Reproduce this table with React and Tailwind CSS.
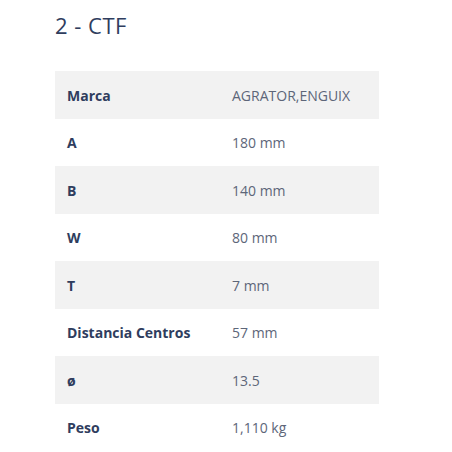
import React from 'react';

const rows = [
  ['Marca', 'AGRATOR,ENGUIX'],
  ['A', '180 mm'],
  ['B', '140 mm'],
  ['W', '80 mm'],
  ['T', '7 mm'],
  ['Distancia Centros', '57 mm'],
  ['ø', '13.5'],
  ['Peso', '1,110 kg'],
];

const App = () => {
  return (
    <div className="w-[452px] h-[452px] bg-white overflow-hidden font-['Open_Sans',sans-serif]">
      <div className="pl-[55px] pt-[11px]">
        <h2 className="text-[22px] leading-[28px] font-normal text-[#2f3d5e] tracking-[0.5px]">2 - CTF</h2>
      </div>
      <div className="ml-[55px] mt-[32px] w-[324px]">
        {rows.map(([label, value], i) => (
          <div
            key={label}
            className={`flex items-center h-[47.5px] text-[14px] pt-[1px] ${i % 2 === 0 ? 'bg-[#f2f2f2]' : 'bg-white'}`}
          >
            <div className="w-[177px] pl-[12px] font-bold text-[#2f3d5e]">{label}</div>
            <div className="text-[#5d6679]">{value}</div>
          </div>
        ))}
      </div>
    </div>
  );
};

export default App;
